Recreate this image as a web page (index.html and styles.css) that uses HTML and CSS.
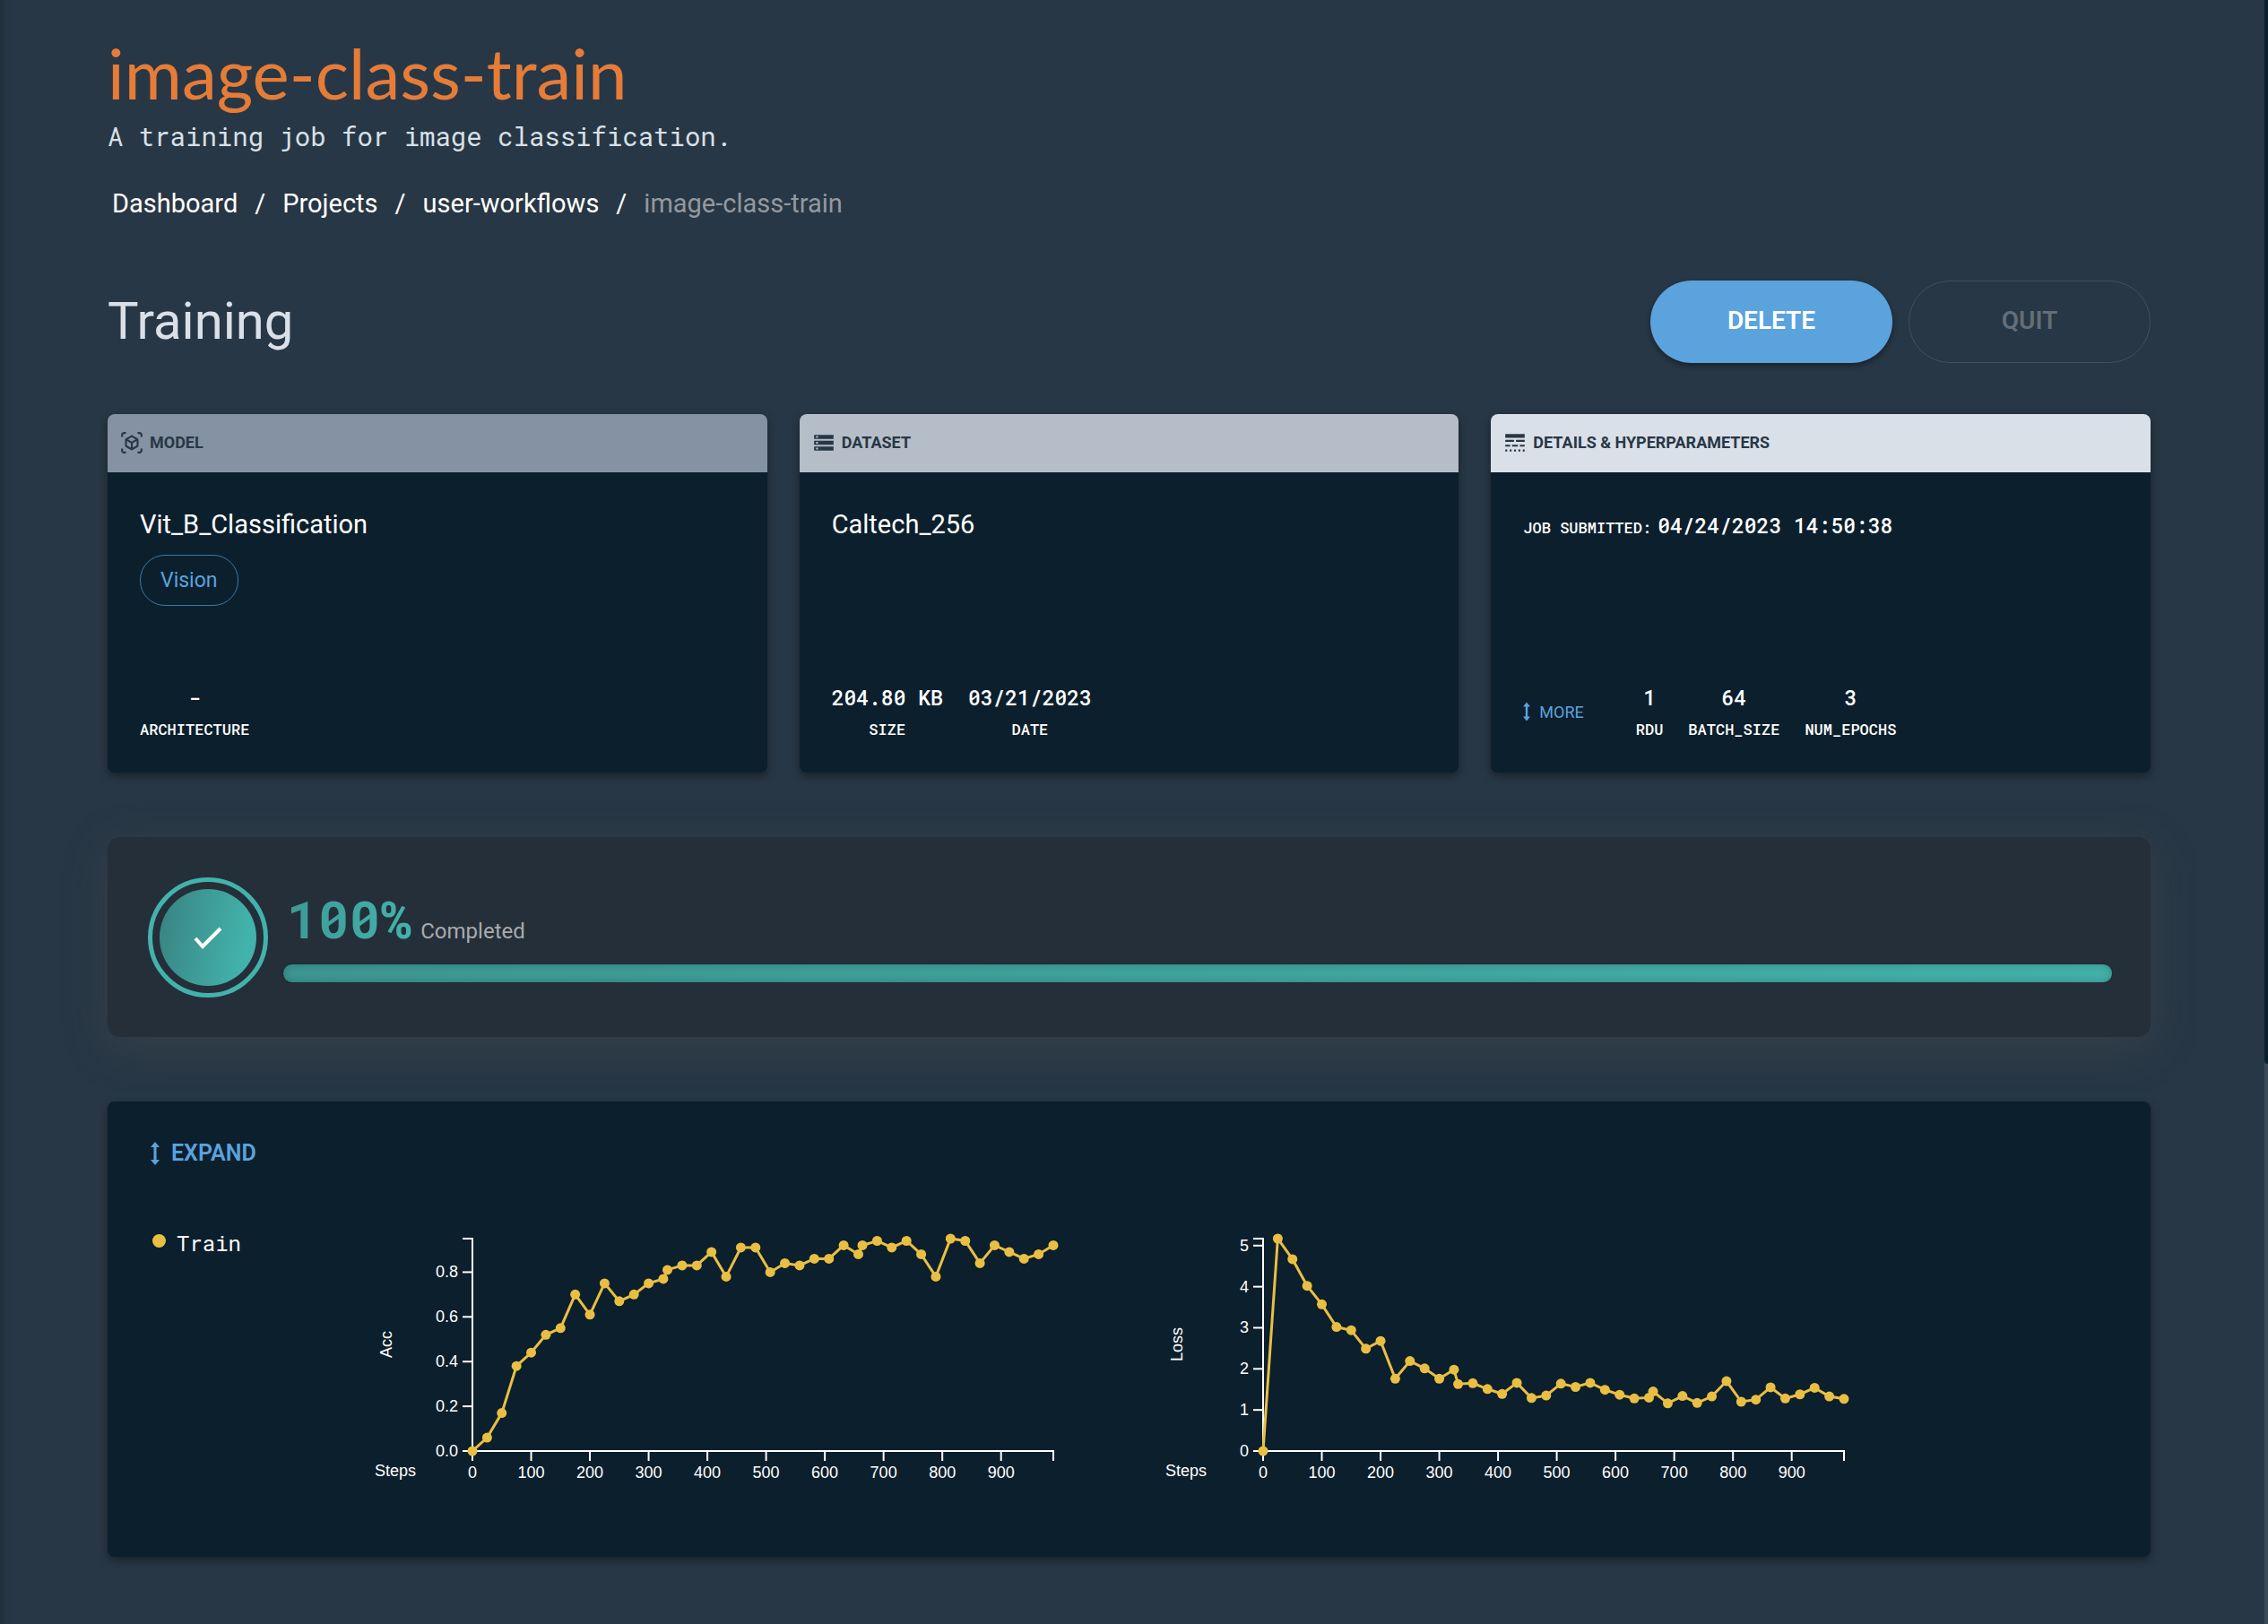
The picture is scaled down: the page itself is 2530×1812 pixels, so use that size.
FILE: index.html
```html
<!DOCTYPE html>
<html lang="en">
<head>
<meta charset="utf-8">
<title>image-class-train</title>
<link rel="stylesheet" href="styles.css">
</head>
<body>
<main class="page">
  <header class="head">
    <h1 class="title">image-class-train</h1>
    <p class="subtitle">A training job for image classification.</p>
    <nav class="crumbs" aria-label="Breadcrumb">
      <a href="#">Dashboard</a><span>/</span><a href="#">Projects</a><span>/</span><a href="#">user-workflows</a><span>/</span><span class="current">image-class-train</span>
    </nav>
  </header>

  <section class="bar">
    <h2 class="section-title">Training</h2>
    <div class="actions">
      <button class="btn primary" type="button">DELETE</button>
      <button class="btn ghost" type="button" disabled>QUIT</button>
    </div>
  </section>

  <section class="cards">
    <article class="card">
      <h3 class="card-head model">
        <svg class="icon" viewBox="0 0 24 24" fill="currentColor" aria-hidden="true"><path d="M3 4c0-.55.45-1 1-1h2V1H4C2.340 1 1 2.340 1 4v2h2V4zM3 20v-2H1v2c0 1.660 1.340 3 3 3h2v-2H4c-.55 0-1-.45-1-1zM20 1h-2v2h2c.55 0 1 .45 1 1v2h2V4c0-1.660-1.340-3-3-3zM21 20c0 .55-.45 1-1 1h-2v2h2c1.660 0 3-1.340 3-3v-2h-2v2zM19 14.870V9.130c0-.72-.38-1.380-1-1.730l-5-2.880c-.31-.18-.65-.27-1-.27s-.69.090-1 .27L6 7.390c-.62.360-1 1.020-1 1.740v5.740c0 .72.380 1.380 1 1.730l5 2.880c.31.180.65.270 1 .27s.69-.090 1-.27l5-2.880c.62-.350 1-1.010 1-1.730zm-8 2.300l-4-2.300v-4.630l4 2.330v4.600zm1-6.330L8.040 8.530 12 6.250l3.960 2.280L12 10.840zm5 4.030l-4 2.300v-4.600l4-2.330v4.630z"/></svg>
        MODEL
      </h3>
      <div class="card-body">
        <div>
          <p class="name">Vit_B_Classification</p>
          <span class="chip">Vision</span>
        </div>
        <dl class="stats"><div><dt>ARCHITECTURE</dt><dd>-</dd></div></dl>
      </div>
    </article>
    <article class="card">
      <h3 class="card-head dataset">
        <svg class="icon" viewBox="0 0 24 24" fill="currentColor" aria-hidden="true"><path d="M2 20h20v-4H2v4zm2-3h2v2H4v-2zM2 4v4h20V4H2zm4 3H4V5h2v2zm-4 7h20v-4H2v4zm2-3h2v2H4v-2z"/></svg>
        DATASET
      </h3>
      <div class="card-body">
        <p class="name">Caltech_256</p>
        <dl class="stats">
          <div><dt>SIZE</dt><dd>204.80 KB</dd></div>
          <div><dt>DATE</dt><dd>03/21/2023</dd></div>
        </dl>
      </div>
    </article>
    <article class="card">
      <h3 class="card-head details">
        <svg class="icon" viewBox="0 0 24 24" fill="currentColor" aria-hidden="true"><path d="M2 3v4h20V3H2zM2 11h9V9H2v2zm11 0h9V9h-9v2zM2 16h5v-2H2v2zm7 0h6v-2H9v2zm8 0h5v-2h-5v2zM2 21h2v-2H2v2zm4.500 0h2v-2h-2v2zm4.500 0h2v-2h-2v2zm4.500 0h2v-2h-2v2zm4.500 0h2v-2h-2v2z"/></svg>
        DETAILS &amp; HYPERPARAMETERS
      </h3>
      <div class="card-body">
        <p class="submitted"><span>JOB SUBMITTED:</span><time>04/24/2023 14:50:38</time></p>
        <div class="foot">
          <button class="link" type="button">
            <svg class="arrow" viewBox="0 0 10 26" fill="currentColor" aria-hidden="true"><path d="M5 0l5 6H6.500v14H10l-5 6-5-6h3.500V6H0z"/></svg>MORE
          </button>
          <dl class="stats">
            <div><dt>RDU</dt><dd>1</dd></div>
            <div><dt>BATCH_SIZE</dt><dd>64</dd></div>
            <div><dt>NUM_EPOCHS</dt><dd>3</dd></div>
          </dl>
        </div>
      </div>
    </article>
  </section>

  <section class="progress">
    <div class="ring"><div class="disc">
      <svg viewBox="0 0 32 26" fill="none" stroke="#fff" stroke-width="4" aria-hidden="true"><path d="M2 14l8 9L30 3"/></svg>
    </div></div>
    <div class="progress-main">
      <p class="progress-text"><strong>100%</strong><span id="status">Completed</span></p>
      <div class="track" role="progressbar" aria-valuenow="100" aria-labelledby="status"><div class="fill" style="width:100%"></div></div>
    </div>
  </section>

  <section class="panel">
    <button class="link large" type="button">
      <svg class="arrow" viewBox="0 0 10 26" fill="currentColor" aria-hidden="true"><path d="M5 0l5 6H6.500v14H10l-5 6-5-6h3.500V6H0z"/></svg>EXPAND
    </button>
    <div class="charts">
      <p class="legend"><i></i>Train</p>
      <svg class="chart" id="acc" viewBox="0 0 882 340" role="img" aria-label="Acc by steps"></svg>
      <svg class="chart" id="loss" viewBox="0 0 882 340" role="img" aria-label="Loss by steps"></svg>
    </div>
  </section>
</main>
<div class="scroll" aria-hidden="true"><div class="thumb"></div></div>
<script src="charts.js"></script>
</body>
</html>
```
FILE: styles.css
```css
* { box-sizing: border-box; margin: 0; padding: 0; }
:root {
  --ink: #0c1f2d;
  --page: #283745;
  --blue: #5ba3dd;
  --mono: "Roboto Mono", "DejaVu Sans Mono", monospace;
}
body { background: var(--page); color: #fff; font-family: Roboto, sans-serif; }
button { font: inherit; border: 0; background: none; cursor: pointer; }
.page { min-height: 100vh; padding: 42px 131px 72px 120px; box-shadow: inset 10px 0 10px -8px rgba(0, 0, 0, .2); }
.title { font: 400 78px/78px Lato, sans-serif; color: #e57c38; }
.subtitle { font: 29px/40px var(--mono); color: #d9e0e8; margin-top: 12px; }
.crumbs { display: flex; gap: 19px; margin-top: 35px; padding-left: 5px; font-size: 29px; line-height: 40px; }
.crumbs a { color: #fff; text-decoration: none; }
.crumbs .current { color: #93999f; }

.bar { display: flex; justify-content: space-between; align-items: center; margin-top: 66px; }
.section-title { padding-bottom: 3px; font-size: 58px; line-height: 68px; font-weight: 400; color: #d9e0e8; }
.actions { display: flex; gap: 18px; }
.btn { width: 270px; height: 92px; padding-bottom: 3px; border-radius: 46px; font-size: 28px; font-weight: 600; }
.btn.primary { background: var(--blue); color: #fff; box-shadow: 0 3px 6px rgba(0, 0, 0, .4); }
.btn.ghost { border: 1px solid #41505c; color: #636e78; }

.cards { display: grid; grid-template-columns: repeat(3, 1fr); gap: 36px; margin-top: 57px; }
.card, .panel { background: var(--ink); border-radius: 8px; box-shadow: 0 4px 10px rgba(0, 0, 0, .4); }
.card { display: flex; flex-direction: column; min-height: 400px; overflow: hidden; }
.card-head { display: flex; align-items: center; gap: 7px; height: 65px; padding: 0 14px 2px; font-size: 18px; font-weight: 700; color: #283745; }
.model { background: #8592a3; }
.dataset { background: #b5bec8; }
.details { background: #d9e0e8; }
.icon { width: 26px; height: 26px; }
.card-body { flex: 1; display: flex; flex-direction: column; justify-content: space-between; padding: 38px 36px 36px; }
.name { font-size: 29px; line-height: 40px; }
.chip { display: inline-block; margin-top: 14px; padding: 0 22px; line-height: 55px; border: 1px solid #3d79ad; border-radius: 28px; font-size: 23px; color: var(--blue); }
.stats { display: flex; gap: 28px; font-family: var(--mono); font-weight: 500; text-align: center; }
.stats div { display: flex; flex-direction: column-reverse; gap: 8px; }
.stats dd { font-size: 23px; line-height: 32px; }
.stats dt { font-size: 17px; line-height: 24px; }
.submitted { display: flex; align-items: baseline; gap: 7px; font: 500 23px/42px var(--mono); }
.submitted span { font-size: 17px; }
.foot { display: flex; align-items: center; gap: 58px; }
.link { display: flex; align-items: center; gap: 10px; font-size: 18px; color: var(--blue); }
.arrow { width: 8px; height: 22px; }

.progress { display: flex; align-items: center; gap: 16px; min-height: 223px; margin-top: 72px; padding: 0 42px 0 45px; border-radius: 14px; background: #252f39; box-shadow: 0 12px 50px rgba(90, 90, 90, .25); }
.ring { width: 134px; height: 134px; padding: 8px; border: 5px solid #42b3ab; border-radius: 50%; }
.disc { display: flex; align-items: center; justify-content: center; height: 100%; border-radius: 50%; background: linear-gradient(100deg, #398281, #42b3ab 85%); }
.disc svg { width: 32px; height: 26px; }
.progress-main { flex: 1; }
.progress-text { display: flex; align-items: baseline; gap: 10px; padding-left: 5px; color: #a8abaf; font-size: 24px; }
.progress-text strong { font: 700 58px/60px var(--mono); color: transparent; background: linear-gradient(90deg, #3d9a94, #42b3ab); background-clip: text; }
.track { height: 22px; margin-top: 20px; border-radius: 11px; background: #1a242d; }
.fill { height: 100%; border: 1px solid #1f2b34; border-radius: 11px; background: linear-gradient(90deg, #3c9590, #42afa8); box-shadow: inset 0 0 8px rgba(0, 0, 0, .2); }

.panel { margin-top: 72px; padding: 41px 48px 68px; }
.link.large { gap: 13px; font-size: 25px; line-height: 34px; font-weight: 600; }
.large .arrow { width: 10px; height: 26px; }
.charts { display: grid; grid-template-columns: 230px 882px 882px; margin-top: 25px; }
.legend { display: flex; align-items: center; gap: 12px; height: 40px; margin-top: 38px; padding-left: 2px; font: 24px/40px var(--mono); }
.legend i { width: 15px; height: 15px; margin-bottom: 6px; border-radius: 50%; background: #e9bf43; }
.chart { width: 100%; display: block; font-family: "Liberation Sans", sans-serif; font-size: 18px; fill: #fff; }
.axis { stroke: #fff; stroke-width: 2; fill: none; }
.line { stroke: #e9bf43; stroke-width: 3; fill: none; }
.dot { fill: #e9bf43; }

.scroll { position: fixed; top: 0; right: 0; bottom: 0; width: 4px; background: #3c4a57; }
.thumb { height: 65.5%; background: var(--ink); border-bottom-left-radius: 4px; }
```
FILE: charts.js
```js
const steps = [0,25,50,75,100,125,150,175,200,225,250,275,300,325,332,357,382,407,432,457,482,507,532,557,582,607,632,657,664,689,714,739,764,789,814,839,864,889,914,939,964,989];
const acc = [0,.06,.17,.38,.44,.52,.55,.70,.61,.75,.67,.70,.75,.77,.81,.83,.83,.89,.78,.91,.91,.80,.84,.83,.86,.86,.92,.88,.92,.94,.91,.94,.88,.78,.95,.94,.84,.92,.89,.86,.88,.92];
const loss = [0,5.17,4.67,4.02,3.57,3.02,2.94,2.49,2.68,1.76,2.19,2.01,1.76,1.98,1.63,1.65,1.51,1.39,1.66,1.29,1.35,1.64,1.56,1.66,1.49,1.37,1.28,1.30,1.45,1.16,1.34,1.17,1.33,1.70,1.20,1.25,1.55,1.28,1.38,1.54,1.33,1.27];

const X0 = 129, X1 = 777, Y0 = 290, Y1 = 53;

function draw(id, values, max, ticks, label, digits) {
  const x = s => X0 + s / 989 * (X1 - X0);
  const y = v => Y0 - v / max * (Y0 - Y1);
  let s = `<path class="axis" d="M${X0 - 11} ${Y1}H${X0}V${Y0}H${X0 - 11}M${X0} ${Y0 + 11}V${Y0}H${X1}V${Y0 + 11}"/>`;
  for (const t of ticks) {
    s += `<path class="axis" d="M${X0 - 11} ${y(t)}H${X0}"/><text x="${X0 - 16}" y="${y(t) + 6}" text-anchor="end">${t.toFixed(digits)}</text>`;
  }
  for (let t = 0; t < 989; t += 100) {
    s += `<path class="axis" d="M${x(t)} ${Y0}v11"/><text x="${x(t)}" y="${Y0 + 30}" text-anchor="middle">${t}</text>`;
  }
  s += `<text x="20" y="${Y0 + 28}">Steps</text>`;
  s += `<text transform="translate(39 171) rotate(-90)" text-anchor="middle">${label}</text>`;
  const pts = values.map((v, i) => [x(steps[i]), y(v)]);
  s += `<polyline class="line" points="${pts.join(' ')}"/>`;
  s += pts.map(p => `<circle class="dot" cx="${p[0]}" cy="${p[1]}" r="5.5"/>`).join('');
  document.getElementById(id).innerHTML = s;
}

draw('acc', acc, .95, [0, .2, .4, .6, .8], 'Acc', 1);
draw('loss', loss, 5.17, [0, 1, 2, 3, 4, 5], 'Loss', 0);
```
